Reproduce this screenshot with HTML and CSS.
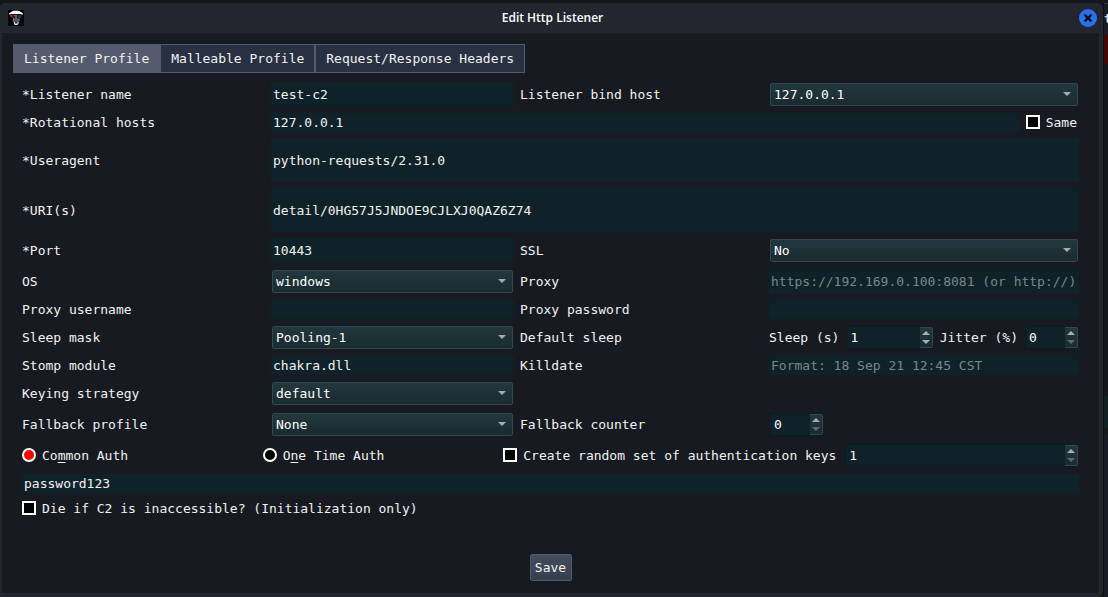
FILE: index.html
```html
<!DOCTYPE html>
<html lang="en">
<head>
<meta charset="utf-8">
<title>Edit Http Listener</title>
<link rel="stylesheet" href="styles.css">
</head>
<body>
<div class="desktop">
  <main class="window">
    <header class="titlebar">
      <svg class="app-icon" viewBox="0 0 16 16" aria-hidden="true">
        <rect width="16" height="16" fill="#030405"/>
        <path d="M1 4.500V3.500L3 2L5.500 .7h5L13 2l2 1.500v1L11.500 4h-7z" fill="#fff"/>
        <path d="M2 5h4v2.500L4.500 8.500 3 7z" fill="#5c2026"/>
        <path d="M9.500 5H14l-1 3-2 .5-1.500-1z" fill="#24383b"/>
        <path d="M7 4.500h2v3l2.500 3-.5 2H5l-.5-2L7 7.500z" fill="#56595d"/>
        <path d="M5 8.500h1v2H5zM10.500 8.500h1v2h-1z" fill="#858b8e"/>
        <path d="M6 12h4.500v1.500L9.500 15h-3L6 13.500z" fill="#e4e6e7"/>
        <path d="M7 12h2.500v1.500H7z" fill="#202326"/>
        <path d="M2 5.500h2v1H2zM6 5h1v1H6z" fill="#b53638"/>
      </svg>
      <h1 class="title">Edit Http Listener</h1>
      <button class="close" type="button" aria-label="Close">
        <svg viewBox="0 0 18 18" aria-hidden="true"><path d="M5.500 5.500l7 7M12.500 5.500l-7 7" stroke="#080b12" stroke-width="2.400" fill="none"/></svg>
      </button>
    </header>
    <div class="content">
      <nav class="tabs">
        <button class="tab active" type="button">Listener Profile</button>
        <button class="tab" type="button">Malleable Profile</button>
        <button class="tab" type="button">Request/Response Headers</button>
      </nav>
      <form class="form">
        <div class="row">
          <label for="name">*Listener name</label>
          <input class="field" id="name" type="text" value="test-c2">
          <label for="bind">Listener bind host</label>
          <div class="combo"><select id="bind"><option>127.0.0.1</option></select><svg class="arrow" viewBox="0 0 8 4"><path d="M0 0h8L4 4z"/></svg></div>
        </div>
        <div class="row short">
          <label for="hosts">*Rotational hosts</label>
          <div class="span hosts">
            <input class="field" id="hosts" type="text" value="127.0.0.1">
            <label class="check"><input type="checkbox">Same</label>
          </div>
        </div>
        <div class="row tall">
          <label for="agent">*Useragent</label>
          <input class="field span" id="agent" type="text" value="python-requests/2.31.0">
        </div>
        <div class="row tall">
          <label for="uri">*URI(s)</label>
          <input class="field span" id="uri" type="text" value="detail/0HG57J5JNDOE9CJLXJ0QAZ6Z74">
        </div>
        <div class="row">
          <label for="port">*Port</label>
          <input class="field" id="port" type="text" value="10443">
          <label for="ssl">SSL</label>
          <div class="combo"><select id="ssl"><option>No</option></select><svg class="arrow" viewBox="0 0 8 4"><path d="M0 0h8L4 4z"/></svg></div>
        </div>
        <div class="row">
          <label for="os">OS</label>
          <div class="combo"><select id="os"><option>windows</option></select><svg class="arrow" viewBox="0 0 8 4"><path d="M0 0h8L4 4z"/></svg></div>
          <label for="proxy">Proxy</label>
          <input class="field" id="proxy" type="text" placeholder="https://192.169.0.100:8081 (or http://)">
        </div>
        <div class="row short">
          <label for="puser">Proxy username</label>
          <input class="field" id="puser" type="text">
          <label for="ppass">Proxy password</label>
          <input class="field" id="ppass" type="password">
        </div>
        <div class="row">
          <label for="mask">Sleep mask</label>
          <div class="combo"><select id="mask"><option>Pooling-1</option></select><svg class="arrow" viewBox="0 0 8 4"><path d="M0 0h8L4 4z"/></svg></div>
          <span>Default sleep</span>
          <div class="sleep">
            <label for="sleep">Sleep (s)</label>
            <div class="spin grow"><input id="sleep" type="number" value="1"><span class="steps"><button type="button" aria-label="Increase sleep"><svg viewBox="0 0 8 4"><path d="M0 4h8L4 0z"/></svg></button><button type="button" aria-label="Decrease sleep"><svg viewBox="0 0 8 4"><path d="M0 0h8L4 4z"/></svg></button></span></div>
            <label for="jitter">Jitter (%)</label>
            <div class="spin compact"><input id="jitter" type="number" value="0"><span class="steps"><button type="button" aria-label="Increase jitter"><svg viewBox="0 0 8 4"><path d="M0 4h8L4 0z"/></svg></button><button class="dim" type="button" aria-label="Decrease jitter"><svg viewBox="0 0 8 4"><path d="M0 0h8L4 4z"/></svg></button></span></div>
          </div>
        </div>
        <div class="row short">
          <label for="stomp">Stomp module</label>
          <input class="field" id="stomp" type="text" value="chakra.dll">
          <label for="kill">Killdate</label>
          <input class="field" id="kill" type="text" placeholder="Format: 18 Sep 21 12:45 CST">
        </div>
        <div class="row">
          <label for="keying">Keying strategy</label>
          <div class="combo"><select id="keying"><option>default</option></select><svg class="arrow" viewBox="0 0 8 4"><path d="M0 0h8L4 4z"/></svg></div>
        </div>
        <div class="row">
          <label for="fallback">Fallback profile</label>
          <div class="combo"><select id="fallback"><option>None</option></select><svg class="arrow" viewBox="0 0 8 4"><path d="M0 0h8L4 4z"/></svg></div>
          <label for="counter">Fallback counter</label>
          <div class="spin compact"><input id="counter" type="number" value="0"><span class="steps"><button type="button" aria-label="Increase counter"><svg viewBox="0 0 8 4"><path d="M0 4h8L4 0z"/></svg></button><button class="dim" type="button" aria-label="Decrease counter"><svg viewBox="0 0 8 4"><path d="M0 0h8L4 4z"/></svg></button></span></div>
        </div>
        <div class="row auth">
          <label class="check"><input type="radio" name="auth" checked><span>Co<u>m</u>mon Auth</span></label>
          <label class="check"><input type="radio" name="auth"><span>O<u>n</u>e Time Auth</span></label>
          <label class="check keys"><input type="checkbox">Create random set of authentication keys</label>
          <div class="spin"><input type="number" value="1" aria-label="Number of authentication keys"><span class="steps"><button type="button" aria-label="Increase keys"><svg viewBox="0 0 8 4"><path d="M0 4h8L4 0z"/></svg></button><button class="dim" type="button" aria-label="Decrease keys"><svg viewBox="0 0 8 4"><path d="M0 0h8L4 4z"/></svg></button></span></div>
        </div>
        <input class="field password" type="text" value="password123" aria-label="Password">
        <label class="check"><input type="checkbox">Die if C2 is inaccessible? (Initialization only)</label>
        <button class="save" type="button">Save</button>
      </form>
    </div>
  </main>
  <aside class="behind">
    <div class="behind-head">t</div>
    <div class="behind-alert"></div>
    <div class="behind-body"></div>
    <div class="behind-field"></div>
    <div class="behind-foot"></div>
  </aside>
</div>
</body>
</html>
```

FILE: styles.css
```css
* { box-sizing: border-box; }
body {
  margin: 0;
  background: #14181a;
  color: #f2f2f2;
  font: 13px/19px "DejaVu Sans Mono", monospace;
}
input, select, button { font: inherit; color: inherit; margin: 0; }
svg { display: block; }
.desktop { display: flex; min-height: 100vh; padding-top: 3px; }
.window {
  flex: 1;
  min-width: 0;
  display: flex;
  flex-direction: column;
  background: #23262e;
  border-radius: 5px 6px 6px 0;
  padding: 0 4px 4px 2px;
}
.titlebar {
  display: grid;
  grid-template-columns: 18px 1fr 18px;
  align-items: center;
  height: 30px;
  padding: 0 2px 0 6px;
}
.app-icon { width: 16px; height: 16px; }
.title {
  margin: 0;
  text-align: center;
  font: 600 12px/18px "Open Sans", "Noto Sans", sans-serif;
  color: #fff;
}
.close {
  width: 18px;
  height: 18px;
  padding: 0;
  border: 0;
  border-radius: 50%;
  background: #2573f2;
}
.content { flex: 1; background: #171a21; padding: 11px 11px 12px; }
.tabs { display: flex; }
.tab {
  height: 29px;
  padding: 0 10px;
  border: 1px solid #555b6f;
  border-left-width: 0;
  background: #283041;
}
.tab.active { padding-right: 12px; border-left-width: 1px; border-right-width: 0; background: #555a6d; }
.tab:last-child { border-left-width: 1px; }
.form {
  display: flex;
  flex-direction: column;
  gap: 6px;
  padding: 9px 9px 0;
}
.row {
  display: grid;
  grid-template-columns: 243fr 243fr 243fr 310fr;
  column-gap: 6px;
  align-items: center;
  height: 25px;
}
.row > * { min-width: 0; }
.short { height: 19px; }
.tall { height: 44px; }
.span { grid-column: 2 / -1; }
.field {
  width: 100%;
  height: 100%;
  min-width: 0;
  padding: 0 2px;
  border: 0;
  border-radius: 0;
  background: #102229;
  outline: 0;
}
.field::placeholder { color: #7b8688; opacity: 1; }
.password { height: 19px; }
.hosts { display: flex; gap: 6px; height: 19px; }
.hosts .check { padding-right: 2px; }
.combo { display: grid; align-items: center; padding: 0 1px; }
.combo select {
  grid-area: 1 / 1;
  appearance: none;
  width: 100%;
  height: 23px;
  padding: 0 3px;
  border: 1px solid #30494f;
  border-radius: 2px;
  background: linear-gradient(#22383e, #1a2b31);
  color: #fff;
}
.arrow {
  grid-area: 1 / 1;
  justify-self: end;
  width: 8px;
  height: 4px;
  margin: 0 7px 1px 0;
  fill: #a5aeb0;
  pointer-events: none;
}
.check { display: flex; align-items: center; gap: 6px; height: 19px; white-space: nowrap; }
.check input {
  appearance: none;
  flex: none;
  width: 14px;
  height: 14px;
  margin-bottom: 1px;
  border: 2px solid #fff;
  background: #000;
}
.check input[type="radio"] { border-radius: 50%; }
.check input[type="radio"]:checked { background: #f00; }
.check u { text-underline-offset: 2px; }
.spin {
  display: flex;
  height: 23px;
  margin: 0 1px;
  border: 1px solid #0d1a20;
  border-right: 0;
  border-radius: 2px;
  background: #102229;
}
.spin input {
  flex: 1;
  width: 0;
  min-width: 0;
  padding: 0 3px;
  border: 0;
  background: transparent;
  color: #fff;
  appearance: textfield;
  outline: 0;
}
.spin input::-webkit-inner-spin-button { appearance: none; margin: 0; }
.steps {
  display: grid;
  grid-template-rows: 1fr 1fr;
  width: 13px;
  border: 1px solid #30494f;
  border-left-width: 0;
  border-radius: 0 2px 2px 0;
  background: linear-gradient(#22383e, #1a2b31);
}
.steps button {
  display: grid;
  place-items: center;
  padding: 0;
  border: 0;
  background: none;
  fill: #a5aeb0;
}
.steps svg { width: 8px; height: 4px; }
.steps .dim { fill: #5c6b6f; }
.compact { width: 53px; flex: none; }
.sleep { display: flex; align-items: center; gap: 6px; }
.sleep label { white-space: nowrap; }
.grow { flex: 1; }
.auth { grid-template-columns: 1fr 1fr auto 1fr; }
.keys { padding-right: 2px; }
.save {
  align-self: center;
  width: 42px;
  height: 27px;
  margin-top: 30px;
  padding: 0;
  border: 1px solid #50596a;
  border-radius: 2px;
  background: linear-gradient(#444d5d, #373f4d);
}
.behind {
  flex: none;
  display: flex;
  flex-direction: column;
  width: 5px;
  overflow: hidden;
  border-left: 1px solid #0e1013;
  background: #171a21;
}
.behind-head {
  height: 32px;
  border-top: 1px solid #343638;
  background: #1a1c1f;
  font: bold 13px/30px "DejaVu Sans Mono", monospace;
  color: #ddd;
}
.behind-alert { height: 29px; background: #430702; }
.behind-body { flex: 1; background: #141719; }
.behind-field { height: 32px; background: #102023; }
.behind-foot { height: 169px; border-top: 6px solid #16191b; background: #171c25; }
```
